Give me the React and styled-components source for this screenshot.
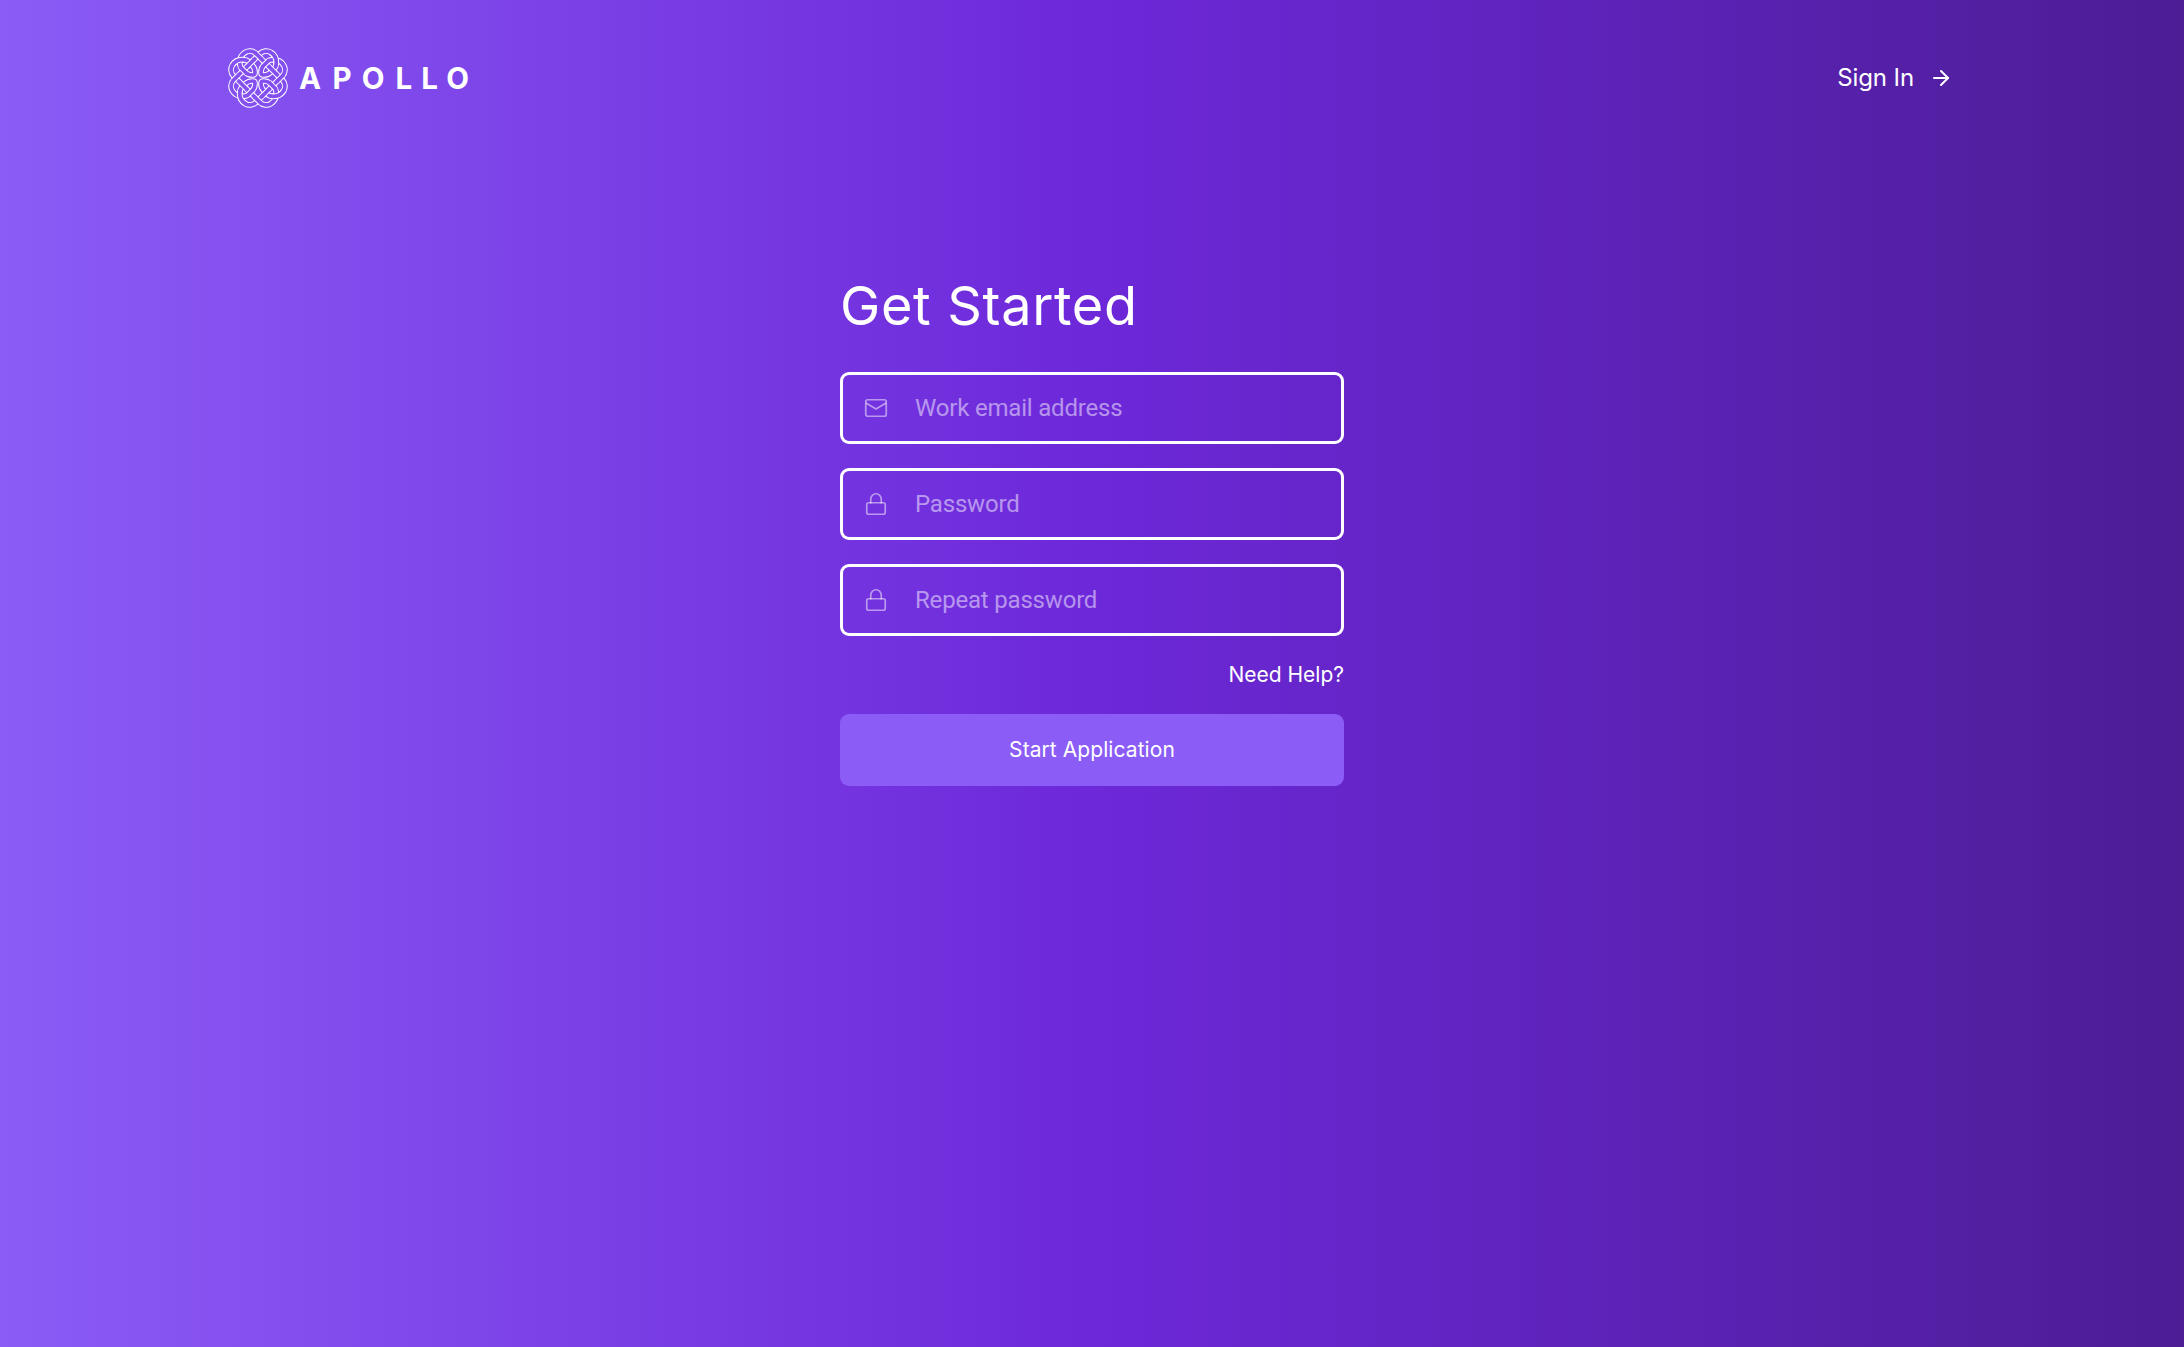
import React from 'react';
import styled, { createGlobalStyle } from 'styled-components';
import { ArrowRight } from 'lucide-react';

const GlobalStyle = createGlobalStyle`
  * { box-sizing: border-box; }
  body { margin: 0; font-family: Inter, sans-serif; color: #fff; }
`;

const Page = styled.div`
  min-height: 100vh;
  background: linear-gradient(to right, #8b5cf6, #6d28d9 50%, #4c1d95);
`;

const Header = styled.header`
  display: flex;
  align-items: center;
  justify-content: space-between;
  height: 156px;
  padding: 0 228px;
`;

const Brand = styled.a`
  display: flex;
  align-items: center;
  gap: 11px;
`;

const Wordmark = styled.span`
  font-weight: 700;
  font-size: 29.5px;
  line-height: 36px;
`;

const Letter = styled.span`
  letter-spacing: ${(p) => p.$gap}px;
`;

const SignIn = styled.a`
  display: flex;
  align-items: center;
  gap: 15px;
  font-size: 24px;
  line-height: 36px;
  letter-spacing: -0.1px;
  padding-right: 3px;
`;

const Form = styled.form`
  display: flex;
  flex-direction: column;
  width: 504px;
  margin: 114px auto 0;
`;

const Title = styled.h1`
  margin: 0 0 30px;
  font-size: 54px;
  line-height: 72px;
  font-weight: 400;
  letter-spacing: 0.67px;
`;

const Field = styled.label`
  display: flex;
  align-items: center;
  height: 72px;
  margin-bottom: 24px;
  padding: 0 21px;
  border: 3px solid #fff;
  border-radius: 9px;
`;

const FieldIcon = styled.svg`
  flex: none;
  width: 24px;
  height: 24px;
  margin-right: 27px;
  fill: none;
  stroke: rgba(255, 255, 255, 0.5);
  stroke-width: 1.7;
`;

const Input = styled.input`
  flex: 1;
  min-width: 0;
  padding: 0;
  border: 0;
  outline: 0;
  background: transparent;
  color: #fff;
  font: 24px/36px Roboto, sans-serif;
  letter-spacing: -0.19px;
  &::placeholder { color: rgba(255, 255, 255, 0.5); opacity: 1; }
`;

const Help = styled.a`
  align-self: flex-end;
  font-size: 21px;
  line-height: 30px;
`;

const Submit = styled.button`
  height: 72px;
  margin-top: 24px;
  border: 0;
  border-radius: 9px;
  background: #8b5cf6;
  color: #fff;
  font: 400 21px/30px Inter, sans-serif;
  letter-spacing: 0.07px;
`;

const Ribbon = styled.path`
  fill: none;
  stroke: ${(p) => (p.$edge ? '#fff' : '#000')};
  stroke-width: ${(p) => (p.$edge ? 5.7 : 3.7)};
  stroke-linecap: ${(p) => (p.$edge ? 'butt' : 'square')};
`;

/* One quarter of the knot: a looping ribbon and the straight run that crosses it. */
const loop =
  'M0-22.4L-2.2-24.6C-5-27.2-9.5-27.6-12.5-25.8C-16.5-23.4-18.4-19.5-18.3-15.5C-18.2-13-18-11.2-16.7-9.9' +
  'L-12-5.2C-9.4-2.8-7.4-3-5.4-3Q-3-3-3-5.4C-3-7.4-2.8-9.4-5.2-12' +
  'L-9.9-16.7C-11.2-18-13-18.2-15.5-18.3C-19.5-18.4-23.4-16.5-25.8-12.5C-27.6-9.5-27.2-5-24.6-2.2L-22.4 0';
const run = 'M-22.6.2L.2-22.6';
/* Stretches where a ribbon passes on top. */
const overs = [
  'M2.4-20L-2.2-24.6',
  'M-13.2-18.1L-15.5-18.3C-19.5-18.4-23.4-16.5-25.8-12.5',
  'M-17-10.2L-12-5.2',
  'M-4.8-17.6L-10.8-11.6',
];
const turns = [0, 90, 180, 270];

function Knot() {
  return (
    <svg width="60" height="60" viewBox="-30 -30 60 60">
      <mask id="weave" maskUnits="userSpaceOnUse" x="-30" y="-30" width="60" height="60">
        {[true, false].map((edge) =>
          turns.map((a) => (
            <g key={`${edge}${a}`} transform={`rotate(${a})`}>
              <Ribbon $edge={edge} d={loop} />
              <Ribbon $edge={edge} d={run} />
            </g>
          ))
        )}
        {turns.map((a) => (
          <g key={a} transform={`rotate(${a})`}>
            {overs.map((d) => (
              <g key={d}><Ribbon $edge d={d} /><Ribbon d={d} /></g>
            ))}
          </g>
        ))}
      </mask>
      <rect x="-30" y="-30" width="60" height="60" fill="#fff" mask="url(#weave)" />
    </svg>
  );
}

const letters = [['A', 11.5], ['P', 10], ['O', 11.2], ['L', 9], ['L', 8.3], ['O', 0]];

function MailIcon() {
  return (
    <FieldIcon viewBox="0 0 24 24">
      <rect x="1.75" y="3.75" width="20.5" height="16.5" rx="2" />
      <path d="M2 7l10 6 10-6" />
    </FieldIcon>
  );
}

function LockIcon() {
  return (
    <FieldIcon viewBox="0 0 24 24">
      <rect x="2.75" y="10.75" width="18.5" height="11.5" rx="2" />
      <path d="M6.75 11.5V7a5.25 5.25 0 0 1 10.5 0v4.5" />
    </FieldIcon>
  );
}

export default function App() {
  return (
    <Page>
      <GlobalStyle />
      <Header>
        <Brand>
          <Knot />
          <Wordmark>
            {letters.map(([char, gap], i) => <Letter key={i} $gap={gap}>{char}</Letter>)}
          </Wordmark>
        </Brand>
        <SignIn>Sign In <ArrowRight size={24} strokeWidth={2} /></SignIn>
      </Header>
      <Form>
        <Title>Get Started</Title>
        <Field><MailIcon /><Input type="email" placeholder="Work email address" /></Field>
        <Field><LockIcon /><Input type="password" placeholder="Password" /></Field>
        <Field><LockIcon /><Input type="password" placeholder="Repeat password" /></Field>
        <Help>Need Help?</Help>
        <Submit type="button">Start Application</Submit>
      </Form>
    </Page>
  );
}
